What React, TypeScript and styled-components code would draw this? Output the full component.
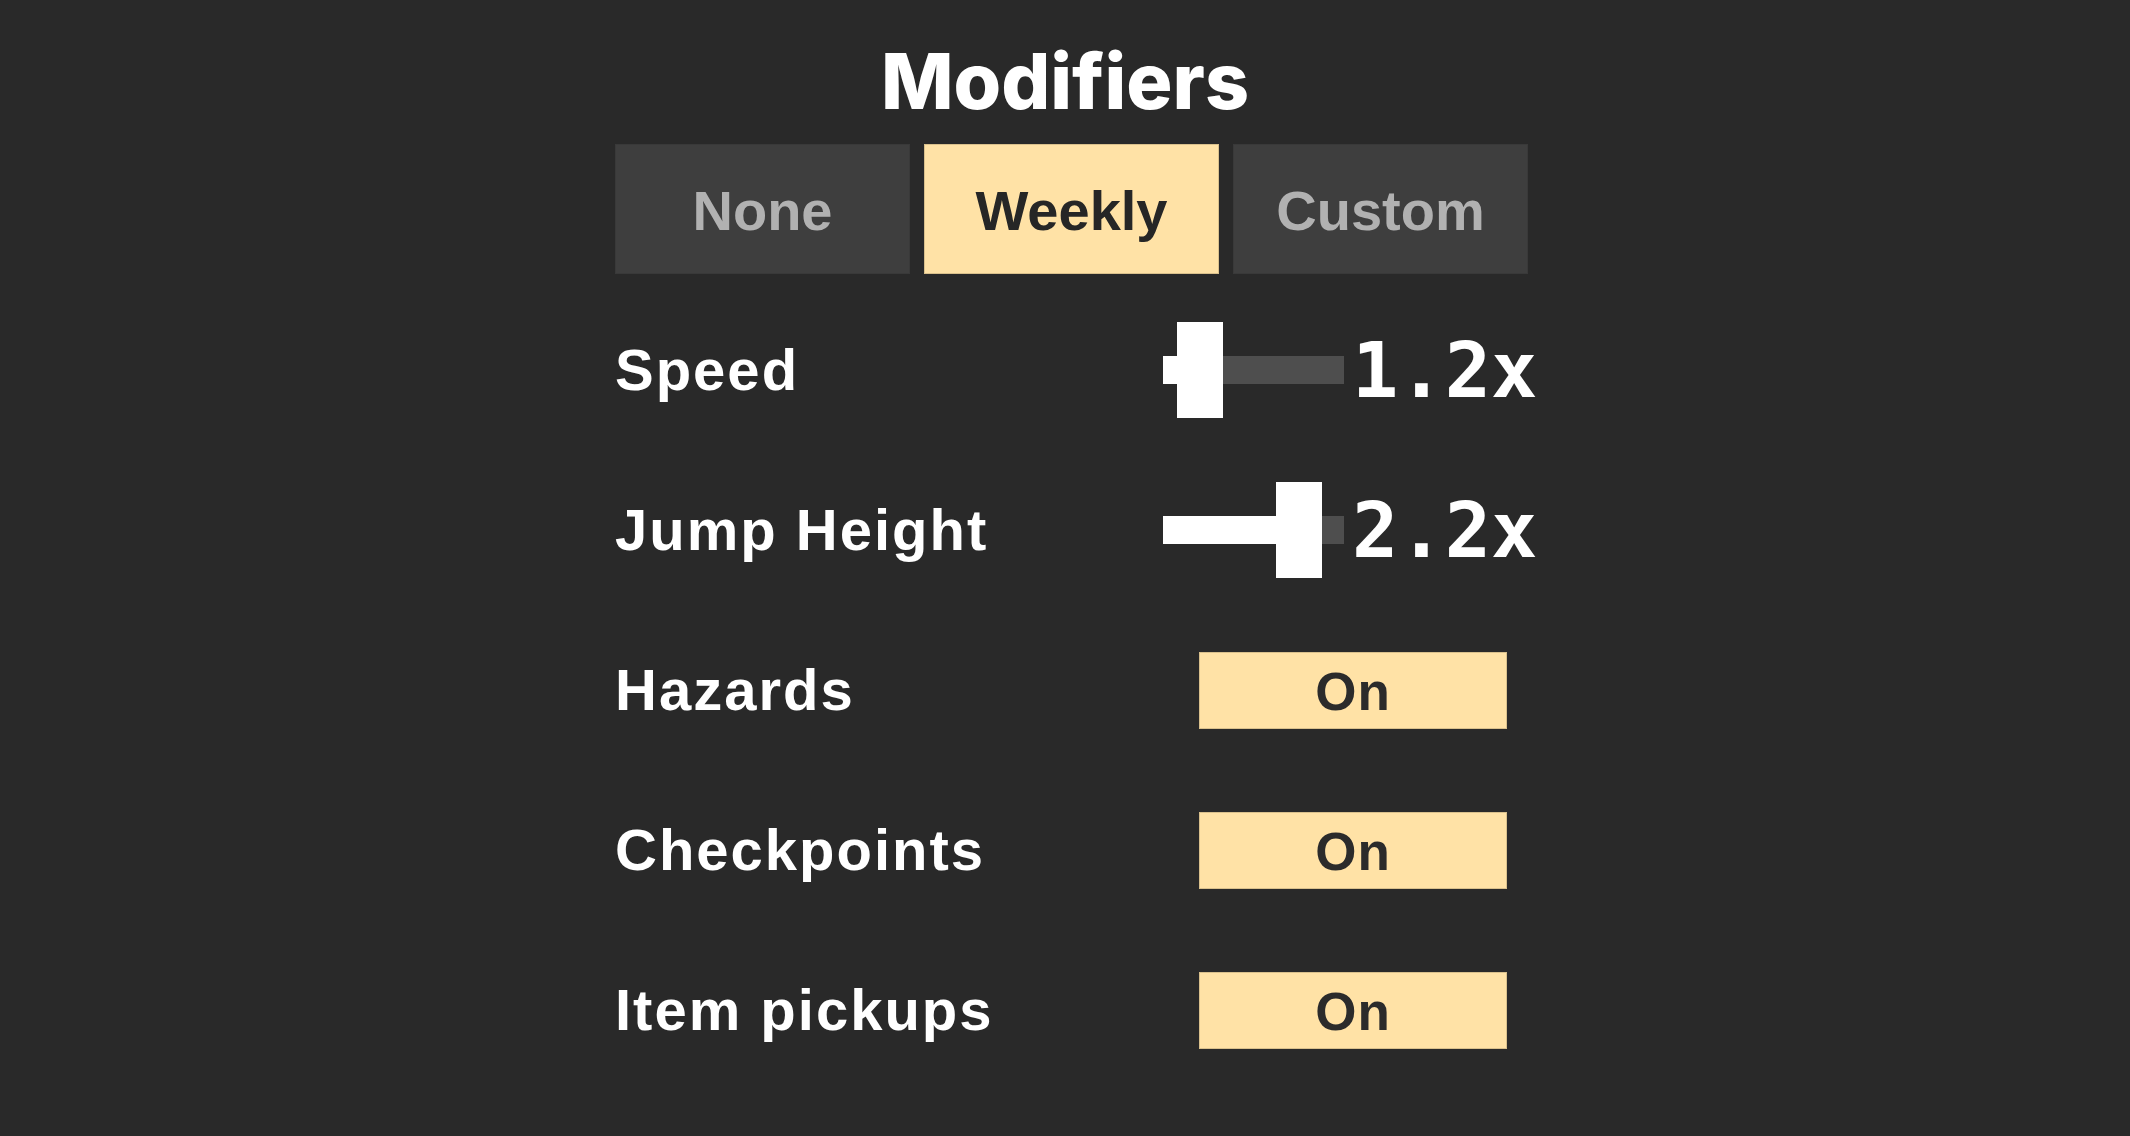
import React from "react";
import styled, { createGlobalStyle } from "styled-components";

const GlobalStyle = createGlobalStyle`
  html, body {
    margin: 0;
    padding: 0;
    background: #292929;
  }
  body {
    font-family: "Liberation Sans", Arial, sans-serif;
    color: #ffffff;
  }
`;

const Page = styled.main`
  min-height: 1136px;
  box-sizing: border-box;
  padding-top: 42px;
  display: flex;
  flex-direction: column;
  align-items: center;
`;

const Title = styled.h1`
  margin: 0;
  font-family: Inter, "Liberation Sans", sans-serif;
  font-weight: 800;
  font-size: 77px;
  line-height: 78px;
  color: #ffffff;
  text-align: center;
`;

const Panel = styled.section`
  width: 913px;
  margin-left: 13px;
  margin-top: 24px;
  display: flex;
  flex-direction: column;
`;

const Tabs = styled.div`
  display: grid;
  grid-template-columns: repeat(3, 1fr);
  gap: 14px;
  margin-bottom: 16px;
`;

const Tab = styled.button<{ $active?: boolean }>`
  height: 130px;
  border: none;
  padding: 4px 0 0;
  margin: 0;
  display: flex;
  align-items: center;
  justify-content: center;
  font-family: "Liberation Sans", Arial, sans-serif;
  font-weight: 700;
  font-size: 56px;
  line-height: 1;
  cursor: pointer;
  background: ${(p) => (p.$active ? "#ffe2a6" : "#3e3e3e")};
  color: ${(p) => (p.$active ? "#262626" : "#b1b1b1")};
  box-shadow: ${(p) =>
    p.$active ? "inset 0 0 0 1px #d9c08c" : "inset 0 0 0 1px #393939"};
`;

const Row = styled.div`
  height: 160px;
  display: grid;
  grid-template-columns: 548px 1fr;
  align-items: center;
`;

const Label = styled.span`
  font-family: "Liberation Sans", Arial, sans-serif;
  font-weight: 700;
  font-size: 58px;
  line-height: 1;
  letter-spacing: 2px;
  color: #ffffff;
  white-space: nowrap;
`;

const Control = styled.div`
  display: flex;
  align-items: center;
`;

const Slider = styled.div`
  width: 181px;
  height: 96px;
  display: flex;
  align-items: center;
`;

const TrackFill = styled.div`
  height: 28px;
  background: #ffffff;
  flex: none;
`;

const Handle = styled.div`
  width: 46px;
  height: 96px;
  background: #ffffff;
  flex: none;
`;

const TrackRest = styled.div`
  height: 28px;
  flex: 1;
  background: #4e4e4e;
`;

const Value = styled.span`
  margin-left: 8px;
  font-family: "DejaVu Sans Mono", "Liberation Mono", monospace;
  font-weight: 700;
  font-size: 77px;
  line-height: 1;
  color: #ffffff;
`;

const Toggle = styled.button`
  margin: 0 0 0 36px;
  width: 308px;
  height: 77px;
  padding: 2px 0 0;
  border: none;
  background: #ffe2a6;
  box-shadow: inset 0 0 0 1px #d9c08c;
  display: flex;
  align-items: center;
  justify-content: center;
  font-family: "Liberation Sans", Arial, sans-serif;
  font-weight: 700;
  font-size: 53px;
  line-height: 1;
  letter-spacing: 1px;
  color: #2b2b2b;
  cursor: pointer;
`;

const TRACK_TRAVEL = 181 - 46;

type SliderSetting = { label: string; value: number; pos: number };

const sliders: SliderSetting[] = [
  { label: "Speed", value: 1.2, pos: 0.104 },
  { label: "Jump Height", value: 2.2, pos: 0.837 },
];

const toggles = ["Hazards", "Checkpoints", "Item pickups"];

const modes = ["None", "Weekly", "Custom"];

export default function App() {
  const [mode, setMode] = React.useState("Weekly");
  const [flags, setFlags] = React.useState<Record<string, boolean>>({
    Hazards: true,
    Checkpoints: true,
    "Item pickups": true,
  });

  return (
    <>
      <GlobalStyle />
      <Page>
        <Title>Modifiers</Title>
        <Panel>
          <Tabs>
            {modes.map((m) => (
              <Tab key={m} $active={m === mode} onClick={() => setMode(m)}>
                {m}
              </Tab>
            ))}
          </Tabs>
          {sliders.map((s) => (
            <Row key={s.label}>
              <Label>{s.label}</Label>
              <Control>
                <Slider>
                  <TrackFill style={{ width: Math.round(s.pos * TRACK_TRAVEL) }} />
                  <Handle />
                  <TrackRest />
                </Slider>
                <Value>{s.value.toFixed(1)}x</Value>
              </Control>
            </Row>
          ))}
          {toggles.map((t) => (
            <Row key={t}>
              <Label>{t}</Label>
              <Control>
                <Toggle
                  onClick={() => setFlags((f) => ({ ...f, [t]: !f[t] }))}
                >
                  {flags[t] ? "On" : "Off"}
                </Toggle>
              </Control>
            </Row>
          ))}
        </Panel>
      </Page>
    </>
  );
}
